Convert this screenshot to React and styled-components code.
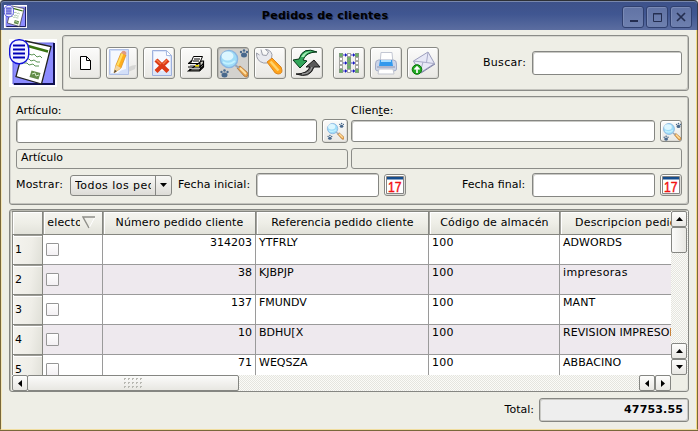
import React from "react";
import styled, { createGlobalStyle, css } from "styled-components";

const Global = createGlobalStyle`
  *{box-sizing:border-box}
  html,body{margin:0;padding:0;overflow:hidden}
  body{font:11px/14px "DejaVu Sans",sans-serif;color:#000;background:#eeeee6}
  svg{display:block;flex:none}
`;
const Window = styled.div`
  width:698px;height:431px;display:flex;flex-direction:column;background:#eeeee6;
  border-bottom:1px solid #79683a;overflow:hidden;
`;
const TitleBar = styled.header`
  height:30px;flex:none;display:flex;align-items:center;padding:2px 5px 0 4px;
  border-top:1px solid #2d3036;border-left:1px solid #3a4254;border-right:1px solid #343c50;
  border-radius:4px 4px 0 0;box-shadow:inset 0 1px #7887ac,inset 1px 0 #5c6c9a;
  background:linear-gradient(#3d5189,#405691 45%,#5b6da0);
`;
const AppMark = styled.div`width:23px;height:23px;margin-left:-1px;`;
const Title = styled.h1`
  margin:0 0 1px;flex:1;text-align:center;font-size:11px;line-height:14px;font-weight:bold;
  letter-spacing:.3px;padding-left:1px;text-shadow:1px 1px #25345f;
`;
const WinButtons = styled.div`display:flex;gap:2px;`;
const WinButton = styled.button`
  width:22px;height:22px;padding:0;border:1px solid #30406f;border-radius:3px;display:grid;place-items:center;
  background:linear-gradient(#6173a5,#6e80af);box-shadow:inset 1px 1px #7a8ab5;
`;
const Body = styled.main`
  flex:1;border:solid;border-width:0 1px 1px;border-color:#79683a #79683a #f0dd9f #79683a;
  box-shadow:inset 1px 0 #f4e6b7,inset -1px 0 #f5d985;padding:5px 8px 0;display:flex;flex-direction:column;
`;
const Frame = styled.section`
  border:1px solid #8b8c88;border-radius:3px;box-shadow:inset -1px -1px #c4c4be,inset 1px 1px #d6d6d0;
`;
const Top = styled.div`display:flex;justify-content:space-between;height:56px;flex:none;`;
const BigMark = styled.div`width:48px;height:48px;margin-top:4px;`;
const Toolbar = styled(Frame)`width:627px;display:flex;align-items:center;padding:0 6px;height:56px;`;
const Tools = styled.div`display:flex;gap:5px;margin-left:${p => p.$gap || 0}px;`;
const Button = styled.button`
  width:${p => p.$w || 32}px;height:${p => p.$h || 32}px;flex:none;padding:0;display:grid;place-items:center;
  overflow:hidden;border:1px solid #888984;border-radius:3px;
  background:${p => p.$pressed ? "#d3d2ce" : "linear-gradient(#fbfbfa,#e9e8e4)"};
  box-shadow:${p => p.$pressed ? "inset 1px 1px #b9b8b3" : "inset 1px 1px #fff,inset -1px -1px #dddcd7"};
`;
const Label = styled.label`
  letter-spacing:${p => p.$ls || 0}px;white-space:pre;width:${p => p.$w ? p.$w + "px" : "auto"};
  flex:none;margin-left:${p => p.$ml || 0}px;u{text-underline-offset:1px}
`;
const Input = styled.input`
  width:${p => p.$w}px;height:${p => p.$h || 24}px;flex:none;padding:0 4px;outline:0;
  border:1px solid #858682;border-radius:3px;background:#fff;box-shadow:inset 1px 1px #c9c9c5;
`;
const ReadOnly = styled.output`
  width:${p => p.$w}px;height:${p => p.$h}px;border:1px solid #8b8c88;border-radius:3px;
  padding:1px 4px;letter-spacing:-.05px;
`;
const Filters = styled(Frame)`
  height:109px;margin-top:5px;padding:6px 6px 0;display:flex;flex-direction:column;flex:none;
`;
const Pair = styled.div`
  display:grid;grid-template-columns:332px 331px;column-gap:3px;align-items:${p => p.$align || "center"};
  height:${p => p.$h}px;
`;
const Spread = styled.div`display:flex;align-items:center;justify-content:space-between;`;
const Row = styled.div`display:flex;align-items:center;height:24px;margin-top:4px;`;
const Holder = styled.div`flex:none;margin-left:5px;`;
const Combo = styled.button`
  width:102px;height:21px;padding:0;border:1px solid #858682;border-radius:3px;display:flex;flex:none;
  font:inherit;color:#000;background:linear-gradient(#f8f8f6,#dddcd7);align-items:stretch;
`;
const ComboText = styled.span`width:84px;padding-left:4px;line-height:19px;text-align:left;`;
const ComboClip = styled.span`display:block;width:76px;overflow:hidden;white-space:nowrap;letter-spacing:.45px;`;
const ComboArrow = styled.span`flex:1;border-left:1px solid #858682;display:grid;place-items:center;`;

const TableFrame = styled.section`
  height:183px;margin-top:4px;flex:none;border:1px solid #858682;border-radius:3px;padding:1px 1px 0 2px;
  box-shadow:inset 1px 1px #b9b9b1,inset -1px -1px #deded8;
  display:grid;grid-template-columns:659px 17px;grid-template-rows:164px 16px;
`;
const Viewport = styled.div`overflow:hidden;background:#fff;`;
const Line = styled.div`
  display:grid;grid-template-columns:31px 60px 153px 173px 131px 130px;height:${p => p.$head ? 24 : 30}px;
  background:${p => p.$alt ? "#eee9ee" : "#fff"};
`;
const heading = css`
  background:linear-gradient(#f5f5f0,#eeeee7 50%,#e2e2da);border-right:1px solid #858680;border-bottom:1px solid #858680;
`;
const Head = styled.div`
  ${heading}
  border-top:1px solid #858680;
  box-shadow:inset 1px 0 #a4a49e,inset 2px 0 #fff,inset 0 1px #fff;
  display:flex;align-items:center;justify-content:${p => p.$start ? "flex-start" : "center"};
  padding:${p => p.$start ? "0 0 1px 4px" : "0 0 1px 1px"};white-space:nowrap;letter-spacing:${p => p.$ls || 0}px;overflow:hidden;
`;
const Clip = styled.span`display:flex;width:33px;overflow:hidden;margin-right:2px;letter-spacing:.2px;`;
const Shift = styled.span`margin-left:-7px;`;
const RowHead = styled.div`
  ${heading}
  background:linear-gradient(100deg,#f5f4ef,#efeee8 60%,#dfdfd7);
  box-shadow:inset 1px 0 #858680,inset 2px 0 #fff,inset 0 1px #9c9c96,inset 0 2px #fff;padding:8px 0 0 3px;
`;
const Cell = styled.div`
  border-right:1px solid #9a9a9a;border-bottom:1px solid #9a9a9a;padding:1px 3px 0;white-space:nowrap;
  text-align:${p => p.$right ? "right" : "left"};letter-spacing:${p => p.$ls || 0}px;
`;
const Check = styled.span`
  display:block;width:13px;height:13px;margin-top:7px;border:1px solid #969696;border-radius:1px;
  background:linear-gradient(#fff,#f3f0f3);
`;
const track = css`background:repeating-conic-gradient(#e5e5df 0 25%,#fbfbf8 0 50%) 0 0/2px 2px;`;
const VBar = styled.div`${track} display:flex;flex-direction:column;align-items:flex-start;`;
const HBar = styled.div`${track} display:flex;`;
const Arrow = styled.button`
  width:16px;height:16px;padding:0;border:1px solid #858682;border-radius:2px;display:grid;place-items:center;flex:none;
  background:linear-gradient(#fdfdfc,#e8e7e3);margin-top:${p => p.$push ? "auto" : 0};margin-left:${p => p.$side ? "auto" : 0};
`;
const Thumb = styled.div`
  width:${p => p.$w}px;height:${p => p.$h}px;flex:none;border:1px solid #858682;border-radius:2px;
  margin-left:${p => p.$pull ? -1 : 0}px;
  background:linear-gradient(${p => p.$dir || "180deg"},#fbfbfa,#e8e7e2);display:grid;place-items:center;
`;
const Footer = styled.footer`display:flex;align-items:center;justify-content:flex-end;margin-top:6px;height:24px;`;
const Total = styled.output`
  width:150px;height:24px;border:1px solid #858682;border-radius:3px;background:#eee;margin-left:5px;
  box-shadow:inset 1px 1px #c9c9c5,inset -1px -1px #c9c9c5;padding:4px 5px;text-align:right;font-weight:bold;letter-spacing:.15px;
`;

const Mark = ({ size }) => (
  <svg width={size} height={size} viewBox="0 0 48 48">
    <path d="M0 0h48v48H0z" fill="#fff" />
    <path d="M4 4h41v41H4z" fill="#8c8cff" stroke="#6767d8" />
    <path d="M45 4v41H5" fill="none" stroke="#101050" strokeWidth="2" />
    <path d="M16.500 2L42 7.500 32.500 45 7 37.500z" fill="#fff" stroke="#222" strokeWidth="1.300" />
    <path d="M19 7l20 5.500" stroke="#397311" strokeWidth="2.600" />
    <path d="M20 15l3 1 2-1 3 3 3-1 2 2M17 20l3 0 2 2 3-1 3 2 3 0M15 24l3 0 2 2 4-1 2 2 4 0" fill="none" stroke="#5f9658" strokeWidth="1" />
    <path d="M22.500 31.500l9 2.500-2 6.500-9-2.500z" fill="#638d49" />
    <path d="M23 35l3-1 1 3 3-1" fill="none" stroke="#d6edc9" />
    <rect x=".7" y=".7" width="19" height="24" rx="9" fill="#f3f3ff" stroke="#1414d8" strokeWidth="1.400" />
    <path d="M4 6.500h12M4 10.500h12M4 14.500h12M4 18.500h12" stroke="#0000b8" strokeWidth="1.900" />
  </svg>
);
const Page = () => <svg width="30" height="30"><path d="M10.500 8.500h6l4 4v9h-10zM16.500 8.500v4h4" fill="#fff" stroke="#000" /></svg>;
const Edit = () => (
  <svg width="30" height="30">
    <path d="M13 25q9-8 16-8l-1 4-9 4z" fill="#d6d6d4" />
    <path d="M2.500 1.500h19v25h-19z" fill="#d3dff8" stroke="#b0c0e6" /><path d="M4 3h15v18q-6 1-8 4H4z" fill="#f5f8ff" />
    <path d="M7 25l2-8 5-12 5 2-5 13z" fill="#ffae1c" stroke="#d98c1c" strokeWidth=".7" />
    <path d="M9.500 17l5-12 2 .8-5 12z" fill="#ffdf61" /><path d="M14 5q1-3 4-2 2 1 1 4z" fill="#e09a84" />
    <path d="M7 25l2-8 5 3z" fill="#f3d6a0" /><path d="M7 25l.8-3 2 1z" fill="#333" />
  </svg>
);
const Delete = () => (
  <svg width="30" height="30">
    <path d="M8.500 2.500h14l5 5v20h-19z" fill="#dbe5f9" stroke="#9eb0dc" /><path d="M10 4h11l5 6v13H10z" fill="#f7f9ff" />
    <path d="M22.500 2.500v5h5z" fill="#fff" stroke="#a9bbe2" />
    <path d="M12 12l12 11.500M24 12L12 23.500" stroke="#dc3a17" strokeWidth="4.400" /><path d="M12 11.500l5 4.500M19 16l4-4" stroke="#f47a46" strokeWidth="1.500" />
  </svg>
);
const Print = () => (
  <svg width="30" height="30">
    <path d="M12.500 8.500h9l-3 7h-9z" fill="#fff" stroke="#000" /><path d="M13 11h6M12 13h6" stroke="#000" />
    <path d="M7.500 15.500l3-2.500h-1m11 0h2v6l-4 4h-11z" fill="#cfcfc6" stroke="#000" strokeWidth="1.200" />
    <path d="M7 15.500h12v7M7 19h12l3.500-3.500M19 21l3.500-3M8 22h11" fill="none" stroke="#000" strokeWidth="1.200" />
    <path d="M9 17.500h9" stroke="#999" /><path d="M8 20h11v1H8z" fill="#bbb" /><path d="M14 17h4v1.500h-4z" fill="#f5df00" />
  </svg>
);
const Paw = ({ x, y }) => <g fill="#49698d"><ellipse cx={x} cy={y + 2} rx="3" ry="2.500" /><circle cx={x - 3} cy={y - 1} r="1.200" /><circle cx={x} cy={y - 2.5} r="1.300" /><circle cx={x + 3} cy={y - 1} r="1.200" /></g>;
const Search = ({ size = 30 }) => (
  <svg width={size} height={size} viewBox="0 0 30 30">
    <Paw x={26} y={5} /><Paw x={6.5} y={25} />
    <path d="M19 20l3-2 7 6q2 2 0 5-2 0-3-1z" fill="#e4a14b" stroke="#a9692a" strokeWidth=".7" /><path d="M22 20l6 6" stroke="#ffe0a2" strokeWidth="2" />
    <path d="M17 17l4 3" stroke="#9aa4b1" strokeWidth="2" />
    <circle cx="11" cy="11" r="8.600" fill="#9edcf8" stroke="#8ab5e0" strokeWidth="1.400" />
    <ellipse cx="9.500" cy="8" rx="6" ry="4.500" fill="#dcf6ff" /><path d="M5 14q6 4 12-1" stroke="#c2f1ff" strokeWidth="2" fill="none" />
  </svg>
);
const Wrench = () => (
  <svg width="30" height="30">
    <path d="M6 1.500l1.500 5.500 4 .5 2-3.500-3-2.500q5 0 6.500 5l-.5 4-4 4.500h-4Q1 13 1.500 5l3 2" fill="#e8e9ee" stroke="#9a9da8" />
    <path d="M12 14l5-4 9 9q3 7-3 7-3 0-5-4z" fill="#ffa31b" stroke="#d98520" /><path d="M15.500 13.500l8 9" stroke="#ffd46c" strokeWidth="2.500" />
  </svg>
);
const Refresh = () => (
  <svg width="30" height="30">
    <path d="M25 4Q11-2 7 11l-6 1 7 8 7-7-4-1q3-8 14-8z" fill="#31a65a" stroke="#063719" />
    <path d="M9 9q3-6 12-6-7 1-9 6z" fill="#a5efb7" />
    <path d="M4 26q14 5 18-7h6l-6-7-8 7h4q-3 7-14 7z" fill="#5b5b5b" stroke="#171717" /><path d="M10 26q8 0 10-7" stroke="#aaa" fill="none" />
  </svg>
);
const Grid = () => {
  const out = [];
  for (let c = 0; c < 3; c++) for (let r = 0; r < 5; r++) {
    const on = c === 1 ? r > 0 && r < 4 : r === 0 || r === 4;
    out.push(<rect key={`${c}-${r}`} x={5.5 + c * 8} y={5.5 + r * 4} width="3" height="3" fill={on ? "#69b563" : "#fff"} stroke={on ? "#7d9d7d" : "#a5a5a2"} />);
  }
  return (
    <svg width="30" height="30">{out}
      <path d="M9 7h4M17 7h4M9 15h4M17 15h4M9 23h4M17 23h4" stroke="#3b3bd0" />
      <path d="M11 5l2 2-2 2zM19 5l2 2-2 2zM11 13l2 2-2 2zM19 13l2 2-2 2zM11 21l2 2-2 2zM19 21l2 2-2 2z" fill="#1818c0" />
    </svg>
  );
};
const Printer = () => (
  <svg width="30" height="30">
    <path d="M10 4.500h11l1 11H9z" fill="#fff" stroke="#c3c7d3" /><path d="M4.500 16q0-4 3-4h15q3 0 3 4v5q0 2-3 2h-15q-3 0-3-2z" fill="#ccd4e8" stroke="#a3acc6" />
    <path d="M9 12h12l1 6H8z" fill="#3299ed" /><path d="M10 12h10v2H10z" fill="#a6ddff" /><path d="M6 18.500h18v1H6z" fill="#8d96b0" />
    <path d="M8 21h14l1 5H7z" fill="#fff" stroke="#c3c6d0" />
  </svg>
);
const Mail = () => (
  <svg width="30" height="30">
    <path d="M5.500 13L20 4l6.500 11.500L12 25z" fill="#e7e8f6" stroke="#9c9ebd" /><path d="M5.500 13l13 1.500L20 4M12 25l3-11M26 15.500l-8-1" fill="none" stroke="#a8aac8" /><path d="M13 25l14-9" stroke="#8083aa" />
    <circle cx="9" cy="21.500" r="4.800" fill="#22a922" stroke="#087408" /><path d="M9 25v-5M6.500 21.500L9 19l2.500 2.500" stroke="#fff" strokeWidth="1.700" fill="none" />
  </svg>
);
const DigitText = styled.text`font:15px "Liberation Sans",sans-serif;fill:#f21212;stroke:#f21212;stroke-width:.5px;`;
const Calendar = () => (
  <svg width="20" height="20">
    <path d="M1.500 1.500h17v17h-17z" fill="#fff" stroke="#858585" /><path d="M2 2h16v2.500H2z" fill="#164d8d" />
    <DigitText x="3" y="17" textLength="13.500" lengthAdjust="spacingAndGlyphs">17</DigitText>
  </svg>
);
const tri = { up: "M0 4h7L3.500 0z", down: "M0 0h7L3.500 4z", left: "M4 0v7L0 3.500z", right: "M0 0v7l4-3.500z" };
const Tri = ({ d }) => <svg width={d === "left" || d === "right" ? 4 : 7} height={d === "left" || d === "right" ? 7 : 4}><path d={tri[d]} /></svg>;
const Grip = () => <svg width="19" height="11">{[0, 1, 2, 3, 4].map(x => [0, 1, 2].map(y => <path key={`${x}${y}`} d={`M${x * 4} ${y * 4 + .5}h2M${x * 4 + .5} ${y * 4}v2`} stroke="#b8b8b2" />))}</svg>;

const rows = [
  ["314203", "YTFRLY", "100", "ADWORDS"],
  ["38", "KJBPJP", "100", "impresoras"],
  ["137", "FMUNDV", "100", "MANT"],
  ["10", "BDHU[X", "100", "REVISION IMPRESORA"],
  ["71", "WEQSZA", "100", "ABBACINO"],
];

export default function App() {
  return (
    <>
      <Global />
      <Window>
        <TitleBar>
          <AppMark><Mark size={23} /></AppMark>
          <Title>Pedidos de clientes</Title>
          <WinButtons>
            <WinButton><svg width="20" height="20"><path d="M7 14h8" stroke="#242e50" strokeWidth="2" /></svg></WinButton>
            <WinButton><svg width="20" height="20"><path d="M6.500 6.500h8v8h-8zM6 7h9" fill="none" stroke="#242e50" /></svg></WinButton>
            <WinButton><svg width="20" height="20"><path d="M6 6l8 8M14 6l-8 8" stroke="#242e50" strokeWidth="1.700" /></svg></WinButton>
          </WinButtons>
        </TitleBar>
        <Body>
          <Top>
            <BigMark><Mark size={48} /></BigMark>
            <Toolbar>
              <Tools>
                <Button><Page /></Button><Button><Edit /></Button><Button><Delete /></Button><Button><Print /></Button>
                <Button $pressed><Search /></Button><Button><Wrench /></Button><Button><Refresh /></Button>
              </Tools>
              <Tools $gap={10}><Button><Grid /></Button><Button><Printer /></Button><Button><Mail /></Button></Tools>
              <Label $ml={44} $w={49} $ls={.3}>Buscar:</Label>
              <Input $w={150} />
            </Toolbar>
          </Top>
          <Filters>
            <Pair $h={16}><Label $ls={-.05}>Artículo:</Label><Label>Clien<u>t</u>e:</Label></Pair>
            <Pair $h={24}>
              <Spread><Input $w={301} /><Button $w={26} $h={24}><Search size={18} /></Button></Spread>
              <Spread><Input $w={304} $h={22} /><Button $w={22} $h={22}><Search size={19} /></Button></Spread>
            </Pair>
            <Pair $h={26} $align="end"><ReadOnly $w={332} $h={20}>Artículo</ReadOnly><ReadOnly $w={331} $h={21} /></Pair>
            <Row>
              <Label $w={54} $ls={.2}>Mostrar:</Label>
              <Combo><ComboText><ComboClip>Todos los pedidos</ComboClip></ComboText><ComboArrow><Tri d="down" /></ComboArrow></Combo>
              <Label $ml={6} $w={78} $ls={.05}>Fecha inicial:</Label>
              <Input $w={123} />
              <Holder><Button $w={22} $h={22}><Calendar /></Button></Holder>
              <Label $ml={56} $w={70}>Fecha final:</Label>
              <Input $w={123} />
              <Holder><Button $w={22} $h={22}><Calendar /></Button></Holder>
            </Row>
          </Filters>
          <TableFrame>
            <Viewport>
              <Line $head>
                <Head />
                <Head $start><Clip><Shift>Selector</Shift></Clip><svg width="14" height="13"><path d="M13 1L7 12" stroke="#fff" /><path d="M13 1H1l6 11" fill="none" stroke="#8f8f89" strokeWidth="1.400" /></svg></Head>
                <Head $ls={.13}>Número pedido cliente</Head><Head $ls={.1}>Referencia pedido cliente</Head>
                <Head $ls={.15}>Código de almacén</Head><Head $start><Label $ml={11} $ls={.2}>Descripcion pedido</Label></Head>
              </Line>
              {rows.map((r, i) => (
                <Line key={i} $alt={i % 2 === 1}>
                  <RowHead>{i + 1}</RowHead><Cell><Check /></Cell><Cell $right>{r[0]}</Cell><Cell>{r[1]}</Cell><Cell $ls={.2}>{r[2]}</Cell><Cell $ls={i === 1 ? .35 : .06}>{r[3]}</Cell>
                </Line>
              ))}
            </Viewport>
            <VBar><Arrow><Tri d="up" /></Arrow><Thumb $w={16} $h={26} $dir="90deg" /><Arrow $push><Tri d="up" /></Arrow><Arrow><Tri d="down" /></Arrow></VBar>
            <HBar><Arrow><Tri d="left" /></Arrow><Thumb $w={212} $h={16} $pull><Grip /></Thumb><Arrow $side><Tri d="left" /></Arrow><Arrow><Tri d="right" /></Arrow></HBar>
          </TableFrame>
          <Footer><Label>Total:</Label><Total>47753.55</Total></Footer>
        </Body>
      </Window>
    </>
  );
}
